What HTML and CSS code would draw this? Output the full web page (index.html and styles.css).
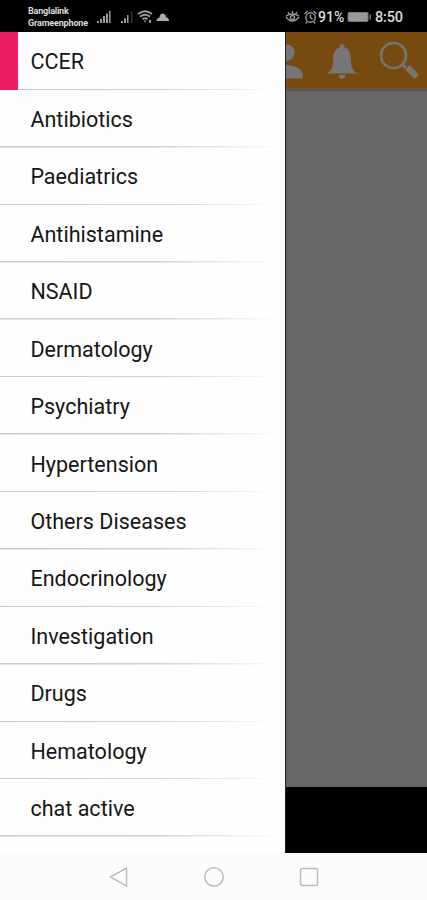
FILE: index.html
```html
<!DOCTYPE html>
<html lang="en">
<head>
<meta charset="utf-8">
<title>CCER</title>
<link rel="stylesheet" href="styles.css">
</head>
<body>
<div class="phone">
  <header class="status">
    <div class="carriers"><span class="sim1">Banglalink</span><span>Grameenphone</span></div>
    <svg class="signals" width="76" height="18" viewBox="0 0 76 18" fill="#999">
      <path d="M1 13h2v2H1zM4 11h2v4H4zM7 8h2v7H7zM10 5.500h2V15h-2zM13 3h1.500v12H13z"/>
      <path d="M25 13h2v2h-2zM28 10.500h2V15h-2zM31 7h1.500v8H31z"/><path fill="#333" d="M35 3.500h1.500V15H35z"/>
      <g fill="none" stroke="#999" stroke-width="1.900"><path d="M42 6q7-5.500 14 0M44 8.800q5-4 10 0M46.500 11.300q2.500-2 5 0"/></g>
      <path fill="#999" d="M47.500 12.500h3L49 14.500zM53 12h2v3h-2z"/>
      <path fill="#aaa" d="M60.500 13q0-2.500 3-3.500 .5-4 3-4 3 0 3.500 3.500 3 1 3 4z"/>
    </svg>
    <svg class="alerts" width="33" height="18" viewBox="0 0 33 18" fill="none" stroke="#999" stroke-width="1.400">
      <path d="M1 8q6.500-4 13 0M1 9q6.500 8 13 0M7.500 3v3M3 4l1.500 2.500M12 4l-1.500 2.500"/><circle cx="7.500" cy="9.500" r="2"/>
      <circle cx="25.500" cy="9.500" r="4.700"/><path d="M25.500 6.500v3l2 2M19.500 6l3-3M31.500 6l-3-3M22 14l-1 1.500M29 14l1 1.500"/>
    </svg>
    <span class="percent">91%</span>
    <svg class="battery" width="25" height="12" viewBox="0 0 25 12"><rect x="1" y="1.500" width="20" height="9" rx="1" fill="#999" stroke="#777"/><path d="M23.200 3.500v5" stroke="#777" stroke-width="1.500"/></svg>
    <span class="clock">8:50</span>
  </header>
  <main class="screen">
    <nav class="drawer">
      <a class="item active">CCER</a>
      <a class="item">Antibiotics</a>
      <a class="item">Paediatrics</a>
      <a class="item">Antihistamine</a>
      <a class="item">NSAID</a>
      <a class="item">Dermatology</a>
      <a class="item">Psychiatry</a>
      <a class="item">Hypertension</a>
      <a class="item">Others Diseases</a>
      <a class="item">Endocrinology</a>
      <a class="item">Investigation</a>
      <a class="item">Drugs</a>
      <a class="item">Hematology</a>
      <a class="item">chat active</a>
    </nav>
    <section class="behind">
      <div class="toolbar">
        <svg width="141" height="56" viewBox="286 32 141 56">
          <g fill="#777676">
            <path d="M286 44.500c5 0 8.500 3.500 8.500 8s-3.500 8.500-8.500 8.500zM286 65c9 .5 16.500 4 16.500 9v4.500H286z"/>
            <path d="M327 73.500c4-3 6-6 6-12 0-8 2-12.500 7-14.500 0-2 .5-3 2-3s2 1 2 3c5 2 7 6.500 7 14.500 0 6 2 9 6 12zM338.500 75h7q-.5 4-3.500 4t-3.500-4z"/>
          </g>
          <circle cx="393.500" cy="55.500" r="12.500" fill="none" stroke="#777676" stroke-width="2.600"/>
          <path d="M402 64l4 4" stroke="#777676" stroke-width="2.600"/>
          <path d="M405.200 69.500l4.500-4.500 8.500 9q0 3-4 5z" fill="#777676"/>
        </svg>
      </div>
      <div class="content"></div>
      <div class="footer"></div>
    </section>
  </main>
  <footer class="navbar">
    <svg width="22" height="22" viewBox="0 0 22 22"><path d="M18.500 2v18L2.500 11z"/></svg>
    <svg width="22" height="22" viewBox="0 0 22 22"><circle cx="11" cy="11" r="9.200"/></svg>
    <svg width="22" height="22" viewBox="0 0 22 22"><rect x="2.500" y="2.500" width="17" height="17" rx="2"/></svg>
  </footer>
</div>
</body>
</html>
```
FILE: styles.css
```css
* { box-sizing: border-box; }
body { margin: 0; background: #000; font-family: Roboto, "Liberation Sans", sans-serif; }
.phone { width: 427px; height: 900px; display: flex; flex-direction: column; overflow: hidden; }
.status { height: 32px; flex: none; background: #000; color: #ddd; display: flex; align-items: center; padding: 2px 23px 0 28px; }
.carriers { width: 61px; margin-right: 7px; display: flex; flex-direction: column; font-size: 9px; line-height: 12.500px; font-weight: 700; letter-spacing: -0.150px; white-space: nowrap; }
.sim1 { letter-spacing: -0.200px; }
.signals { flex: none; }
.alerts { flex: none; margin-left: auto; }
.percent { font-size: 14px; font-weight: 500; width: 27px; }
.battery { margin: 0 3px 0 2px; flex: none; }
.clock { font-size: 14.500px; font-weight: 500; width: 29px; letter-spacing: -0.200px; }
.screen { height: 821px; flex: none; display: flex; }
.drawer { width: 285px; flex: none; background: #fefefe; overflow: hidden; }
.item { display: flex; align-items: center; height: 57.450px; padding: 1px 0 0 30.400px; font-size: 21.500px; letter-spacing: 0.020px; color: #161616; white-space: nowrap; background: linear-gradient(90deg, #ccc 0, #d0d0d0 55%, #fefefe 98%) bottom / 100% 1.500px no-repeat; }
.active { height: 58.200px; border-left: 18px solid #e91e63; padding-left: 12.400px; }
.behind { flex: 1; border-left: 1px solid #222; display: flex; flex-direction: column; background: #000; }
.toolbar { height: 59px; background: #784a10; border-bottom: 3px solid #5d5348; }
.toolbar svg { display: block; }
.content { height: 696px; background: #666; }
.footer { flex: 1; background: #000; }
.navbar { flex: 1; background: #fcfcfc; display: flex; justify-content: center; gap: 73px; padding-top: 13px; }
.navbar svg { fill: none; stroke: #bbb; stroke-width: 1.500; }
```
